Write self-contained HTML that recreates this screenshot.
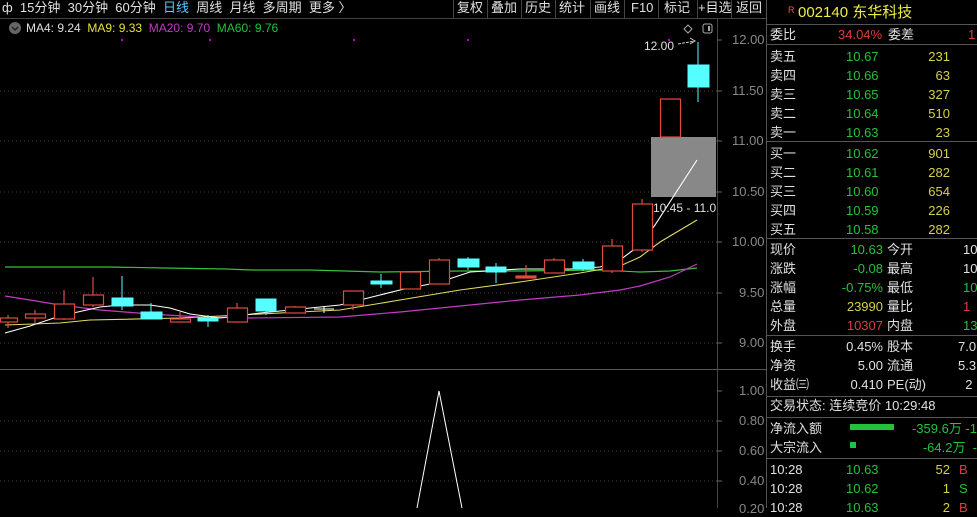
<!DOCTYPE html>
<html><head><meta charset="utf-8"><style>
*{margin:0;padding:0;box-sizing:border-box}
body{width:977px;height:508px;background:#000;overflow:hidden;position:relative;font-family:"Liberation Sans","Noto Sans CJK SC",sans-serif;font-size:13px;color:#ddd}
.t{position:absolute;white-space:nowrap;line-height:16px}
.g{color:#22c33a}.y{color:#d6d04a}.r{color:#e03c3c}.w{color:#e0e0e0}.gr{color:#888}
.hl{position:absolute;left:767px;width:210px;height:1px;background:#555}
</style></head><body>
<svg width="977" height="508" style="position:absolute;left:0;top:0">
<g stroke="#444" stroke-dasharray="1,3">
<line x1="0" y1="91" x2="717" y2="91"/><line x1="0" y1="141" x2="717" y2="141"/><line x1="0" y1="192" x2="717" y2="192"/><line x1="0" y1="242" x2="717" y2="242"/><line x1="0" y1="293" x2="717" y2="293"/><line x1="0" y1="343" x2="717" y2="343"/>
<line x1="0" y1="421" x2="717" y2="421"/><line x1="0" y1="451" x2="717" y2="451"/><line x1="0" y1="481" x2="717" y2="481"/>
</g>
<line x1="0" y1="18.5" x2="766" y2="18.5" stroke="#444"/>
<line x1="717.5" y1="18" x2="717.5" y2="508" stroke="#444"/>
<line x1="766.5" y1="0" x2="766.5" y2="508" stroke="#555"/>
<line x1="0" y1="369.5" x2="766" y2="369.5" stroke="#555"/>
<g stroke="#666"><line x1="717" y1="40" x2="722" y2="40"/><line x1="717" y1="91" x2="722" y2="91"/><line x1="717" y1="141" x2="722" y2="141"/><line x1="717" y1="192" x2="722" y2="192"/><line x1="717" y1="242" x2="722" y2="242"/><line x1="717" y1="293" x2="722" y2="293"/><line x1="717" y1="343" x2="722" y2="343"/><line x1="717" y1="391" x2="722" y2="391"/><line x1="717" y1="421" x2="722" y2="421"/><line x1="717" y1="451" x2="722" y2="451"/><line x1="717" y1="481" x2="722" y2="481"/></g>
<rect x="651" y="137" width="65" height="60" fill="#888"/>
<g fill="#c0c" ><rect x="121" y="39" width="2" height="2"/><rect x="209" y="39" width="2" height="2"/><rect x="353" y="39" width="2" height="2"/><rect x="467" y="39" width="2" height="2"/><rect x="668" y="39" width="2" height="2"/></g>
<polyline fill="none" stroke="#3ac03a" stroke-width="1.2" points="5,267 108,267 165,268 226,269 252,270 310,270 380,272 460,271 520,271 600,270 640,272 670,271 697,268"/>
<polyline fill="none" stroke="#c23cc2" stroke-width="1.2" points="5,296 30,300 60,305 100,310 150,314 200,317 250,318 340,317 400,312 460,306 520,300 580,295 620,290 640,286 670,277 697,264"/>
<polyline fill="none" stroke="#e0dc60" stroke-width="1.1" points="5,325 60,323 90,320 180,318 240,315 300,312 340,310 400,300 460,290 520,282 580,273 620,266 640,257 660,242 697,220"/>
<polyline fill="none" stroke="#fff" stroke-width="1.1" points="5,333 30,326 60,316 100,307 120,305 150,305 170,308 190,314 220,318 260,313 300,309 340,305 360,300 380,295 400,290 440,282 470,272 520,269 570,269 600,267 620,260 640,245 655,225 697,160"/>
<g fill="none" stroke="#e04b3c" stroke-width="1.2">
<line x1="8" y1="315" x2="8" y2="328"/><rect x="0.5" y="318" width="17" height="4" fill="#000"/>
<line x1="35" y1="310" x2="35" y2="323"/><rect x="25.5" y="314" width="20" height="4" fill="#000"/>
<line x1="64" y1="290" x2="64" y2="320"/><rect x="54.5" y="304" width="20" height="15" fill="#000"/>
<line x1="93" y1="277" x2="93" y2="307"/><rect x="83.5" y="295" width="20" height="10" fill="#000"/>
<line x1="180" y1="312" x2="180" y2="322"/><rect x="170.5" y="319" width="20" height="3" fill="#000"/>
<line x1="237" y1="303" x2="237" y2="322"/><rect x="227.5" y="308" width="20" height="14" fill="#000"/>
<line x1="295" y1="306" x2="295" y2="313"/><rect x="285.5" y="307" width="20" height="6" fill="#000"/>
<line x1="353" y1="291" x2="353" y2="310"/><rect x="343.5" y="291" width="20" height="14" fill="#000"/>
<rect x="400.5" y="272" width="20" height="17" fill="#000"/>
<line x1="439" y1="258" x2="439" y2="284"/><rect x="429.5" y="260" width="20" height="24" fill="#000"/>
<line x1="526" y1="265" x2="526" y2="278"/><rect x="516" y="276" width="20" height="2" fill="#e04b3c"/>
<line x1="554" y1="258" x2="554" y2="273"/><rect x="544.5" y="260" width="20" height="13" fill="#000"/>
<line x1="612" y1="239" x2="612" y2="273"/><rect x="602.5" y="246" width="20" height="25" fill="#000"/>
<line x1="642" y1="199" x2="642" y2="252"/><rect x="632.5" y="204" width="20" height="46" fill="#000"/>
<rect x="660.5" y="99" width="20" height="38" fill="#000"/>
</g>
<g stroke="#5ff" fill="#5ff">
<line x1="122" y1="276" x2="122" y2="310"/><rect x="112" y="298" width="21" height="8"/>
<line x1="151" y1="303" x2="151" y2="319"/><rect x="141" y="312" width="21" height="7"/>
<line x1="208" y1="315" x2="208" y2="327"/><rect x="198" y="318" width="20" height="3"/>
<line x1="266" y1="299" x2="266" y2="315"/><rect x="256" y="299" width="20" height="12"/>
<line x1="381" y1="274" x2="381" y2="288"/><rect x="371" y="281" width="21" height="3"/>
<line x1="468" y1="257" x2="468" y2="270"/><rect x="458" y="259" width="21" height="8"/>
<line x1="496" y1="263" x2="496" y2="283"/><rect x="486" y="267" width="20" height="5"/>
<line x1="583" y1="259" x2="583" y2="271"/><rect x="573" y="262" width="21" height="7"/>
<line x1="698" y1="42" x2="698" y2="102"/><rect x="688" y="65" width="21" height="22"/>
</g>
<g stroke="#fff"><line x1="324" y1="306" x2="324" y2="313"/><line x1="314" y1="309" x2="334" y2="309"/></g>
<polyline fill="none" stroke="#fff" points="417,508 439,391 462,508"/>
<line x1="678" y1="44" x2="695" y2="41" stroke="#ccc" stroke-dasharray="3,1"/>
<path d="M690,38 L695,41 L690,44" fill="none" stroke="#ccc"/>
<path d="M688,25 l4,4 l-4,4 l-4,-4z" fill="none" stroke="#aaa"/>
<rect x="703" y="24" width="9" height="9" rx="2" fill="none" stroke="#aaa"/><rect x="708" y="26" width="2" height="5" fill="#aaa"/>
<circle cx="15" cy="28" r="6" fill="#666"/><path d="M12,27 l3,3 l3,-3" fill="none" stroke="#222" stroke-width="1.5"/>
<rect x="850" y="424" width="44" height="6" fill="#22c33a"/><rect x="850" y="442" width="6" height="6" fill="#22c33a"/>
<g stroke="#444"><line x1="453.5" y1="0" x2="453.5" y2="18"/><line x1="487.5" y1="0" x2="487.5" y2="18"/><line x1="521.5" y1="0" x2="521.5" y2="18"/><line x1="555.5" y1="0" x2="555.5" y2="18"/><line x1="590.5" y1="0" x2="590.5" y2="18"/><line x1="624.5" y1="0" x2="624.5" y2="18"/><line x1="658.5" y1="0" x2="658.5" y2="18"/><line x1="697.5" y1="0" x2="697.5" y2="18"/><line x1="731.5" y1="0" x2="731.5" y2="18"/></g>
</svg>
<div class="t w" style="left:2px;top:0;font-size:13px">ф&nbsp;&nbsp;15分钟&nbsp;&nbsp;30分钟&nbsp;&nbsp;60分钟&nbsp;&nbsp;<span style="color:#5cf">日线</span>&nbsp;&nbsp;周线&nbsp;&nbsp;月线&nbsp;&nbsp;多周期&nbsp;&nbsp;更多 〉</div>
<div class="t w" style="left:457px;top:0">复权</div>
<div class="t w" style="left:491px;top:0">叠加</div>
<div class="t w" style="left:525px;top:0">历史</div>
<div class="t w" style="left:559px;top:0">统计</div>
<div class="t w" style="left:594px;top:0">画线</div>
<div class="t w" style="left:631px;top:0">F10</div>
<div class="t w" style="left:664px;top:0">标记</div>
<div class="t w" style="left:698px;top:0">+目选</div>
<div class="t w" style="left:736px;top:0">返回</div>
<div class="t" style="left:26px;top:20px;font-size:12px"><span class="w">MA4: 9.24</span>&nbsp; <span style="color:#e8e040">MA9: 9.33</span>&nbsp; <span style="color:#c23cc2">MA20: 9.70</span>&nbsp; <span class="g">MA60: 9.76</span></div>
<div class="t w" style="left:644px;top:38px;font-size:12px">12.00</div>
<div class="t w" style="left:653px;top:200px;font-size:12px">10.45 - 11.0</div>
<div class="t gr" style="left:732px;top:32px">12.00</div>
<div class="t gr" style="left:732px;top:83px">11.50</div>
<div class="t gr" style="left:732px;top:133px">11.00</div>
<div class="t gr" style="left:732px;top:184px">10.50</div>
<div class="t gr" style="left:732px;top:234px">10.00</div>
<div class="t gr" style="left:739px;top:285px">9.50</div>
<div class="t gr" style="left:739px;top:335px">9.00</div>
<div class="t gr" style="left:739px;top:383px">1.00</div>
<div class="t gr" style="left:739px;top:413px">0.80</div>
<div class="t gr" style="left:739px;top:443px">0.60</div>
<div class="t gr" style="left:739px;top:473px">0.40</div>
<div class="t gr" style="left:739px;top:501px">0.20</div>
<div class="t" style="left:788px;top:2px;font-size:9px;color:#e55">R</div>
<div class="t" style="left:798px;top:4px;font-size:15px;color:#ee4;line-height:18px">002140 东华科技</div>
<div class="hl" style="top:24px"></div>
<div class="t w" style="left:770px;top:27px">委比</div><div class="t r" style="left:838px;top:27px">34.04%</div><div class="t w" style="left:888px;top:27px">委差</div><div class="t r" style="left:968px;top:27px">1</div>
<div class="hl" style="top:44px"></div>
<div class="t w" style="left:770px;top:47px;line-height:19px">卖五<br>卖四<br>卖三<br>卖二<br>卖一</div>
<div class="t g" style="left:846px;top:47px;line-height:19px">10.67<br>10.66<br>10.65<br>10.64<br>10.63</div>
<div class="t y" style="left:910px;top:47px;width:40px;text-align:right;line-height:19px">231<br>63<br>327<br>510<br>23</div>
<div class="hl" style="top:141px"></div>
<div class="t w" style="left:770px;top:144px;line-height:19px">买一<br>买二<br>买三<br>买四<br>买五</div>
<div class="t g" style="left:846px;top:144px;line-height:19px">10.62<br>10.61<br>10.60<br>10.59<br>10.58</div>
<div class="t y" style="left:910px;top:144px;width:40px;text-align:right;line-height:19px">901<br>282<br>654<br>226<br>282</div>
<div class="hl" style="top:238px"></div>
<div class="t w" style="left:770px;top:240px;line-height:19px">现价<br>涨跌<br>涨幅<br>总量<br>外盘</div>
<div class="t" style="left:820px;top:240px;width:63px;text-align:right;line-height:19px"><span class="g">10.63</span><br><span class="g">-0.08</span><br><span class="g">-0.75%</span><br><span class="y">23990</span><br><span class="r">10307</span></div>
<div class="t w" style="left:887px;top:240px;line-height:19px">今开<br>最高<br>最低<br>量比<br>内盘</div>
<div class="t" style="left:963px;top:240px;line-height:19px"><span class="w">10</span><br><span class="w">10</span><br><span class="g">10</span><br><span class="r">1</span><br><span class="g">13(</span></div>
<div class="hl" style="top:335px"></div>
<div class="t w" style="left:770px;top:337px;line-height:19px">换手<br>净资<br>收益㈢</div>
<div class="t w" style="left:820px;top:337px;width:63px;text-align:right;line-height:19px">0.45%<br>5.00<br>0.410</div>
<div class="t w" style="left:887px;top:337px;line-height:19px">股本<br>流通<br>PE(动)</div>
<div class="t w" style="left:958px;top:337px;line-height:19px">7.0<br>5.3<br>&nbsp;&nbsp;2</div>
<div class="hl" style="top:396px"></div>
<div class="t w" style="left:770px;top:398px">交易状态: 连续竞价 10:29:48</div>
<div class="hl" style="top:417px"></div>
<div class="t w" style="left:770px;top:419px;line-height:19px">净流入额<br>大宗流入</div>
<div class="t g" style="left:900px;top:419px;width:77px;text-align:right;line-height:19px">-359.6万 -1<br>-64.2万 &nbsp;-</div>
<div class="hl" style="top:458px"></div>
<div class="t w" style="left:770px;top:460px;line-height:19px">10:28<br>10:28<br>10:28</div>
<div class="t g" style="left:846px;top:460px;line-height:19px">10.63<br>10.62<br>10.63</div>
<div class="t y" style="left:920px;top:460px;width:30px;text-align:right;line-height:19px">52<br>1<br>2</div>
<div class="t" style="left:959px;top:460px;line-height:19px"><span class="r">B</span><br><span class="g">S</span><br><span class="r">B</span></div>
</body></html>
